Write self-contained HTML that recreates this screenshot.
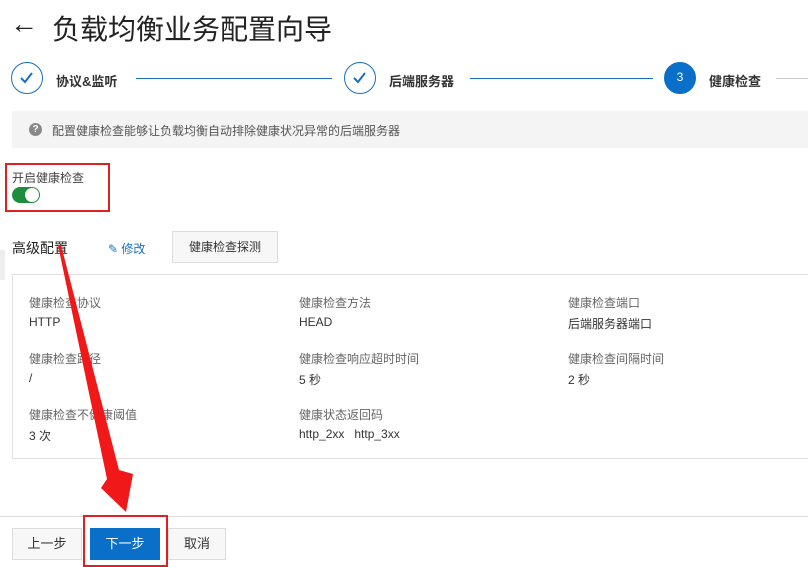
<!DOCTYPE html>
<html><head><meta charset="utf-8"><style>
*{margin:0;padding:0;box-sizing:border-box}
body{width:808px;height:567px;overflow:hidden;background:#fff;font-family:"Liberation Sans","Noto Sans CJK SC",sans-serif;color:#333;position:relative}
.a{position:absolute}
.circ{position:absolute;width:32px;height:32px;border-radius:50%;border:1.5px solid #1a6fc0;top:62px}
.step{position:absolute;top:71px;font-size:13px;font-weight:bold;color:#333}
.line{position:absolute;top:78px;height:1px;background:#1a6fc0}
.lab{position:absolute;font-size:12px;color:#666}
.val{position:absolute;font-size:12px;color:#333}
.btn{position:absolute;top:528px;height:32px;border:1px solid #ddd;background:#f7f7f7;font-size:13px;text-align:center;line-height:30px;color:#333}
</style></head><body>
<div class="a" style="left:10px;top:8px;font-size:28px;color:#222">&#8592;</div>
<div class="a" style="left:52px;top:8px;font-size:28px;color:#222">负载均衡业务配置向导</div>

<div class="circ" style="left:11px"><svg width="29" height="29" viewBox="0 0 29 29"><path d="M9 15l4 4 7-9" stroke="#1a6fc0" stroke-width="2" fill="none"/></svg></div>
<div class="step" style="left:56px">协议&amp;监听</div>
<div class="line" style="left:136px;width:196px"></div>
<div class="circ" style="left:344px"><svg width="29" height="29" viewBox="0 0 29 29"><path d="M9 15l4 4 7-9" stroke="#1a6fc0" stroke-width="2" fill="none"/></svg></div>
<div class="step" style="left:389px">后端服务器</div>
<div class="line" style="left:470px;width:183px"></div>
<div class="circ" style="left:664px;background:#0a6fc8;border-color:#0a6fc8;color:#fff;font-size:12px;text-align:center;line-height:29px">3</div>
<div class="step" style="left:709px">健康检查</div>
<div class="line" style="left:776px;width:32px;background:#ccc"></div>

<div class="a" style="left:12px;top:111px;width:796px;height:37px;background:#f4f4f4"></div>
<div class="a" style="left:29px;top:123px;width:13px;height:13px;border-radius:50%;background:#888;color:#fff;font-size:10px;font-weight:bold;text-align:center;line-height:13px">?</div>
<div class="a" style="left:52px;top:122px;font-size:12px;color:#555">配置健康检查能够让负载均衡自动排除健康状况异常的后端服务器</div>

<div class="a" style="left:5px;top:163px;width:105px;height:49px;border:2px solid #e02020"></div>
<div class="a" style="left:12px;top:169px;font-size:12px;color:#444">开启健康检查</div>
<div class="a" style="left:12px;top:187px;width:28px;height:16px;border-radius:8px;background:#1e8e3e"><div style="position:absolute;right:1px;top:1px;width:14px;height:14px;border-radius:50%;background:#fff"></div></div>

<div class="a" style="left:12px;top:238px;font-size:14px;color:#222">高级配置</div>
<div class="a" style="left:108px;top:240px;font-size:12px;color:#1a6fc0">&#9998; 修改</div>
<div class="a" style="left:172px;top:231px;width:106px;height:32px;border:1px solid #ddd;background:#f7f7f7;font-size:12px;text-align:center;line-height:30px;color:#333">健康检查探测</div>

<div class="a" style="left:0;top:250px;width:5px;height:30px;background:#eee"></div>
<div class="a" style="left:12px;top:274px;width:800px;height:185px;border:1px solid #e2e2e2"></div>
<div class="lab" style="left:29px;top:294px">健康检查协议</div><div class="val" style="left:29px;top:315px">HTTP</div>
<div class="lab" style="left:299px;top:294px">健康检查方法</div><div class="val" style="left:299px;top:315px">HEAD</div>
<div class="lab" style="left:568px;top:294px">健康检查端口</div><div class="val" style="left:568px;top:315px">后端服务器端口</div>
<div class="lab" style="left:29px;top:350px">健康检查路径</div><div class="val" style="left:29px;top:371px">/</div>
<div class="lab" style="left:299px;top:350px">健康检查响应超时时间</div><div class="val" style="left:299px;top:371px">5 秒</div>
<div class="lab" style="left:568px;top:350px">健康检查间隔时间</div><div class="val" style="left:568px;top:371px">2 秒</div>
<div class="lab" style="left:29px;top:406px">健康检查不健康阈值</div><div class="val" style="left:29px;top:427px">3 次</div>
<div class="lab" style="left:299px;top:406px">健康状态返回码</div><div class="val" style="left:299px;top:427px">http_2xx &nbsp; http_3xx</div>

<div class="a" style="left:0;top:516px;width:808px;height:1px;background:#ddd"></div>
<div class="btn" style="left:12px;width:70px">上一步</div>
<div class="btn" style="left:90px;width:70px;background:#0a6fc8;border-color:#0a6fc8;color:#fff">下一步</div>
<div class="btn" style="left:168px;width:58px">取消</div>
<div class="a" style="left:83px;top:515px;width:85px;height:52px;border:2.5px solid #e02020"></div>

<svg class="a" style="left:0;top:0" width="808" height="567"><polygon points="58,245 61,245 119,470 133,474 126,512 101,488 107,479" fill="#f01818"/></svg>
</body></html>
